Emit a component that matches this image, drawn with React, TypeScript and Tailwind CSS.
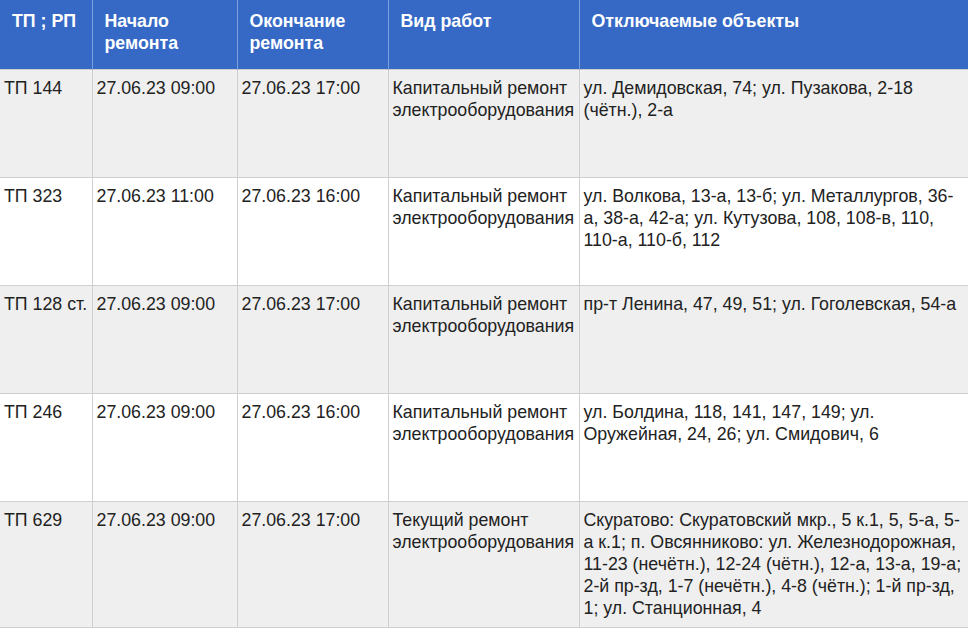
const rows = [
  {
    tp: "ТП 144",
    start: "27.06.23 09:00",
    end: "27.06.23 17:00",
    kind: "Капитальный ремонт электрооборудования",
    objects: "ул. Демидовская, 74; ул. Пузакова, 2-18 (чётн.), 2-а",
  },
  {
    tp: "ТП 323",
    start: "27.06.23 11:00",
    end: "27.06.23 16:00",
    kind: "Капитальный ремонт электрооборудования",
    objects: "ул. Волкова, 13-а, 13-б; ул. Металлургов, 36-а, 38-а, 42-а; ул. Кутузова, 108, 108-в, 110, 110-а, 110-б, 112",
  },
  {
    tp: "ТП 128 ст.",
    start: "27.06.23 09:00",
    end: "27.06.23 17:00",
    kind: "Капитальный ремонт электрооборудования",
    objects: "пр-т Ленина, 47, 49, 51; ул. Гоголевская, 54-а",
  },
  {
    tp: "ТП 246",
    start: "27.06.23 09:00",
    end: "27.06.23 16:00",
    kind: "Капитальный ремонт электрооборудования",
    objects: "ул. Болдина, 118, 141, 147, 149; ул. Оружейная, 24, 26; ул. Смидович, 6",
  },
  {
    tp: "ТП 629",
    start: "27.06.23 09:00",
    end: "27.06.23 17:00",
    kind: "Текущий ремонт электрооборудования",
    objects:
      "Скуратово: Скуратовский мкр., 5 к.1, 5, 5-а, 5-а к.1; п. Овсянниково: ул. Железнодорожная, 11-23 (нечётн.), 12-24 (чётн.), 12-а, 13-а, 19-а; 2-й пр-зд, 1-7 (нечётн.), 4-8 (чётн.); 1-й пр-зд, 1; ул. Станционная, 4",
  },
];

const headers = ["ТП ; РП", "Начало ремонта", "Окончание ремонта", "Вид работ", "Отключаемые объекты"];

export default function App() {
  return (
    <div className="h-[632px] w-[968px] overflow-hidden bg-white font-['Liberation_Sans',Arial,sans-serif] text-[17.8px] leading-[22px] text-[#222]">
      <table className="w-[968px] table-fixed border-collapse">
        <colgroup>
          <col className="w-[92px]" />
          <col className="w-[145px]" />
          <col className="w-[151px]" />
          <col className="w-[191px]" />
          <col className="w-[389px]" />
        </colgroup>
        <thead>
          <tr className="h-[69px] bg-[#3569c5]">
            {headers.map((h) => (
              <th
                key={h}
                className="border-x border-[#7d9fda] pb-[2px] pl-[12px] pr-[4px] pt-[10px] text-left align-top font-bold text-white first:border-l-0"
              >
                {h}
              </th>
            ))}
          </tr>
        </thead>
        <tbody>
          {rows.map((r, i) => (
            <tr key={r.tp} className={`h-[108px] ${i % 2 === 0 ? "bg-[#efefef]" : "bg-white"}`}>
              {[r.tp, r.start, r.end, r.kind, r.objects].map((v, j) => (
                <td
                  key={j}
                  className="border border-[#cfcfcf] px-[4px] pb-[8px] pt-[7px] align-top first:border-l-0 first:pl-[4px]"
                >
                  {v}
                </td>
              ))}
            </tr>
          ))}
        </tbody>
      </table>
    </div>
  );
}
